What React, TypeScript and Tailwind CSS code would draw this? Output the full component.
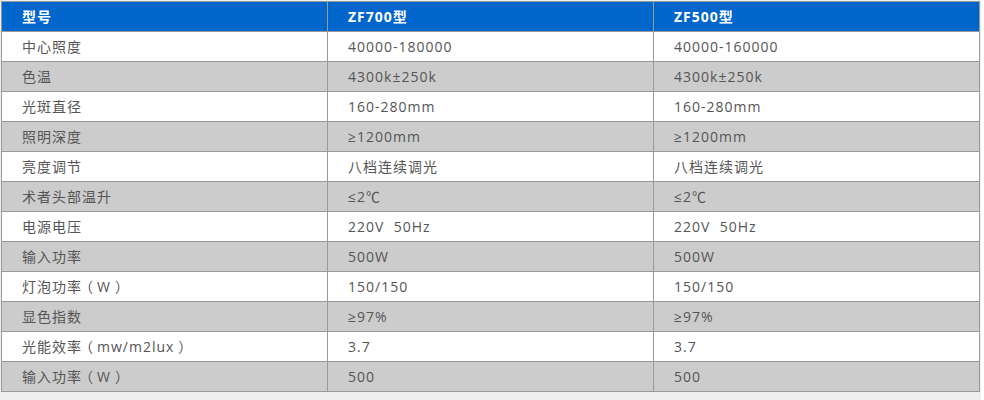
const rows: [string, string, string][] = [
  ['中心照度', '40000-180000', '40000-160000'],
  ['色温', '4300k±250k', '4300k±250k'],
  ['光斑直径', '160-280mm', '160-280mm'],
  ['照明深度', '≥1200mm', '≥1200mm'],
  ['亮度调节', '八档连续调光', '八档连续调光'],
  ['术者头部温升', '≤2℃', '≤2℃'],
  ['电源电压', '220V  50Hz', '220V  50Hz'],
  ['输入功率', '500W', '500W'],
  ['灯泡功率（W）', '150/150', '150/150'],
  ['显色指数', '≥97%', '≥97%'],
  ['光能效率（mw/m2lux）', '3.7', '3.7'],
  ['输入功率（W）', '500', '500'],
];

// full-width parens: centre the ink in its em box, as in the source page
function Cell({ text }: { text: string }) {
  const parts = text.split(/([（）])/);
  return (
    <>
      {parts.map((p, k) =>
        p === '（' ? (
          <span key={k} className="inline-block w-[15px] indent-[-3px] tracking-normal">{p}</span>
        ) : p === '）' ? (
          <span key={k} className="inline-block w-[15px] indent-[4px] tracking-normal">{p}</span>
        ) : (
          <span key={k}>{p}</span>
        )
      )}
    </>
  );
}

export default function App() {
  return (
    <div className="w-[981px] h-[400px] bg-[#eeeeee] pt-px pl-px font-['Open_Sans','Noto_Sans_CJK_SC',sans-serif]">
      <table className="w-[979px] border-collapse table-fixed text-[14px] tracking-[1px]">
        <thead>
          <tr className="bg-[#0066cc] text-white font-semibold">
            <th className="h-[30px] px-5 text-left border border-[#999999]">型号</th>
            <th className="h-[30px] px-5 text-left border border-[#999999]">ZF700型</th>
            <th className="h-[30px] px-5 text-left border border-[#999999]">ZF500型</th>
          </tr>
        </thead>
        <tbody className="text-[#555555]">
          {rows.map((r, i) => (
            <tr key={i} className={i % 2 === 0 ? 'bg-white' : 'bg-[#cccccc]'}>
              {r.map((c, j) => (
                <td key={j} className="h-[30px] px-5 border border-[#999999] whitespace-pre">
                  <Cell text={c} />
                </td>
              ))}
            </tr>
          ))}
        </tbody>
      </table>
    </div>
  );
}
